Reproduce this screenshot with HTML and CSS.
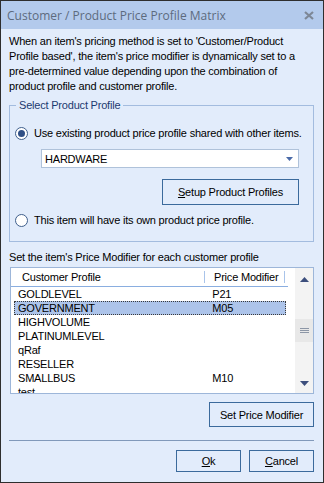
FILE: index.html
```html
<!DOCTYPE html>
<html lang="en">
<head>
    <meta charset="UTF-8">
    <title>Customer / Product Price Profile Matrix</title>
    <link rel="stylesheet" href="styles.css">
</head>
<body>
    <div class="window">
        <!-- Title bar -->
        <div class="titlebar">
            <span class="title">Customer / Product Price Profile Matrix</span>
            <svg class="close" width="10" height="9" viewBox="0 0 10 9">
                <path d="M1 1 L9 8 M9 1 L1 8" stroke="#7d8796" stroke-width="2.2" fill="none"/>
            </svg>
        </div>

        <div class="content">
            <p class="intro">When an item's pricing method is set to 'Customer/Product<br>Profile based', the item's price modifier is dynamically set to a<br>pre-determined value depending upon the combination of<br>product profile and customer profile.</p>

            <fieldset class="group">
                <legend>Select Product Profile</legend>

                <div class="radio-row">
                    <span class="radio checked"></span>
                    <span>Use existing product price profile shared with other items.</span>
                </div>

                <div class="combo">
                    <span>HARDWARE</span>
                    <svg width="7" height="4" viewBox="0 0 7 4"><path d="M0 0 H7 L3.5 4 Z" fill="#4a6aa8"/></svg>
                </div>

                <div class="group-actions">
                    <button class="btn btn-setup"><u>S</u>etup Product Profiles</button>
                </div>

                <div class="radio-row radio-row-last">
                    <span class="radio"></span>
                    <span>This item will have its own product price profile.</span>
                </div>
            </fieldset>

            <p class="list-caption">Set the item's Price Modifier for each customer profile</p>

            <div class="list">
                <div class="list-main">
                    <div class="list-head">
                        <span class="col-name">Customer Profile</span>
                        <span class="col-mod">Price Modifier</span>
                    </div>
                    <div class="list-row"><span class="col-name">GOLDLEVEL</span><span class="col-mod">P21</span></div>
                    <div class="list-row selected"><span class="col-name">GOVERNMENT</span><span class="col-mod">M05</span></div>
                    <div class="list-row"><span class="col-name">HIGHVOLUME</span><span class="col-mod"></span></div>
                    <div class="list-row"><span class="col-name">PLATINUMLEVEL</span><span class="col-mod"></span></div>
                    <div class="list-row"><span class="col-name">qRaf</span><span class="col-mod"></span></div>
                    <div class="list-row"><span class="col-name">RESELLER</span><span class="col-mod"></span></div>
                    <div class="list-row"><span class="col-name">SMALLBUS</span><span class="col-mod">M10</span></div>
                    <div class="list-row"><span class="col-name">test</span><span class="col-mod"></span></div>
                </div>
                <div class="scrollbar">
                    <svg class="arrow" width="9" height="5" viewBox="0 0 9 5"><path d="M4.5 0 L9 5 H0 Z" fill="#3c4e7c"/></svg>
                    <div class="track">
                        <div class="thumb">
                            <svg width="9" height="5" viewBox="0 0 9 5"><path d="M0 0.5 H9 M0 2.5 H9 M0 4.5 H9" stroke="#8c96a6" stroke-width="1"/></svg>
                        </div>
                    </div>
                    <svg class="arrow" width="9" height="5" viewBox="0 0 9 5"><path d="M0 0 H9 L4.5 5 Z" fill="#3c4e7c"/></svg>
                </div>
            </div>

            <div class="list-actions">
                <button class="btn btn-modifier">Set Price Modifier</button>
            </div>

            <hr class="divider">

            <div class="dialog-actions">
                <button class="btn btn-small"><u>O</u>k</button>
                <button class="btn btn-small"><u>C</u>ancel</button>
            </div>
        </div>
    </div>
</body>
</html>
```

FILE: styles.css
```css
html, body {
    margin: 0;
    padding: 0;
}
* {
    box-sizing: border-box;
}
body {
    font-family: "Liberation Sans", Arial, sans-serif;
    font-size: 11px;
    letter-spacing: -0.2px;
    color: #000;
    background: #fff;
}
.window {
    width: 324px;
    height: 483px;
    border: 1px solid #2e2e2e;
    background-color: #e2ecfb;
    display: flex;
    flex-direction: column;
}
.titlebar {
    height: 28px;
    flex-shrink: 0;
    background-color: #b3caec;
    display: flex;
    align-items: center;
    justify-content: space-between;
    padding: 0 9px 0 6px;
}
.title {
    font-family: "Open Sans", "Liberation Sans", sans-serif;
    font-size: 12px;
    letter-spacing: 0;
    color: #5d6b7e;
}
.close {
    display: block;
}
.content {
    flex: 1;
    padding: 0 9px 0 8px;
}
.intro {
    margin: 5px 0 0 0;
    line-height: 15px;
    white-space: nowrap;
}
.group {
    margin: 4px 0 0 0;
    padding: 0 0 13px 0;
    border: 1px solid #a3bcdf;
    min-width: 0;
}
.group legend {
    margin-left: 6px;
    padding: 0 3px;
    line-height: 15px;
    color: #1c3a70;
}
.radio-row {
    display: flex;
    align-items: center;
    height: 16px;
    margin-top: 12px;
    padding-left: 5px;
    white-space: nowrap;
}
.radio-row-last {
    margin-top: 7px;
}
.radio {
    width: 13px;
    height: 13px;
    flex-shrink: 0;
    border-radius: 50%;
    border: 1px solid #3f5f8c;
    background: #fff;
    margin-right: 6px;
    display: flex;
    align-items: center;
    justify-content: center;
}
.radio.checked::after {
    content: "";
    width: 7px;
    height: 7px;
    border-radius: 50%;
    background: #2f4f86;
}
.combo {
    margin: 8px 14px 0 31px;
    height: 19px;
    border: 1px solid #afc2da;
    background: #fff;
    display: flex;
    align-items: center;
    justify-content: space-between;
    padding: 0 5px 0 3px;
}
.combo svg {
    display: block;
}
.group-actions {
    display: flex;
    justify-content: flex-end;
    margin: 11px 14px 0 0;
}
.btn {
    font-family: "Liberation Sans", Arial, sans-serif;
    font-size: 11px;
    letter-spacing: -0.2px;
    color: #000;
    background-color: #e2ecfb;
    border: 1px solid #3b6a9c;
    padding: 0;
    cursor: pointer;
}
.btn u {
    text-underline-offset: 1px;
}
.btn-setup {
    width: 137px;
    height: 26px;
}
.list-caption {
    margin: 8px 0 0 0;
    line-height: 15px;
    white-space: nowrap;
}
.list {
    margin: 2px 0 0 1px;
    height: 127px;
    border: 1px solid #9db6d9;
    background: #fff;
    display: flex;
    overflow: hidden;
}
.list-main {
    flex: 1;
    padding-left: 3px;
}
.list-head {
    height: 19px;
    display: flex;
    align-items: center;
    border-bottom: 1px solid #8aaee0;
    margin-left: -3px;
    padding-left: 3px;
    margin-right: 7px;
}
.list-head .col-name {
    border-right: 1px solid #a9c4ea;
    padding-left: 8px;
}
.list-head .col-mod {
    padding-left: 9px;
    border-right: 1px solid #a9c4ea;
}
.col-name {
    width: 191px;
    padding-left: 3px;
    white-space: nowrap;
}
.col-mod {
    width: 80px;
    padding-left: 7px;
    white-space: nowrap;
}
.list-row {
    height: 14px;
    display: flex;
    align-items: center;
    border: 1px solid transparent;
    width: 272px;
}
.list-row.selected {
    background-color: #adc4ea;
    border: 1px dotted #3a3a3a;
}
.scrollbar {
    width: 18px;
    background: #f3f3f3;
    display: flex;
    flex-direction: column;
    align-items: center;
    padding: 9px 0 7px 0;
}
.arrow {
    display: block;
}
.track {
    flex: 1;
    width: 100%;
    display: flex;
    flex-direction: column;
    padding-top: 37px;
}
.thumb {
    height: 23px;
    background: #e8e8e8;
    display: flex;
    align-items: center;
    justify-content: center;
}
.thumb svg {
    display: block;
}
.list-actions {
    display: flex;
    justify-content: flex-end;
    margin-top: 8px;
}
.btn-modifier {
    width: 105px;
    height: 25px;
}
.divider {
    margin: 13px 0 0 0;
    border: none;
    border-top: 1px solid #8199ba;
    height: 0;
}
.dialog-actions {
    display: flex;
    justify-content: flex-end;
    gap: 8px;
    margin-top: 9px;
}
.btn-small {
    width: 65px;
    height: 22px;
}
```
